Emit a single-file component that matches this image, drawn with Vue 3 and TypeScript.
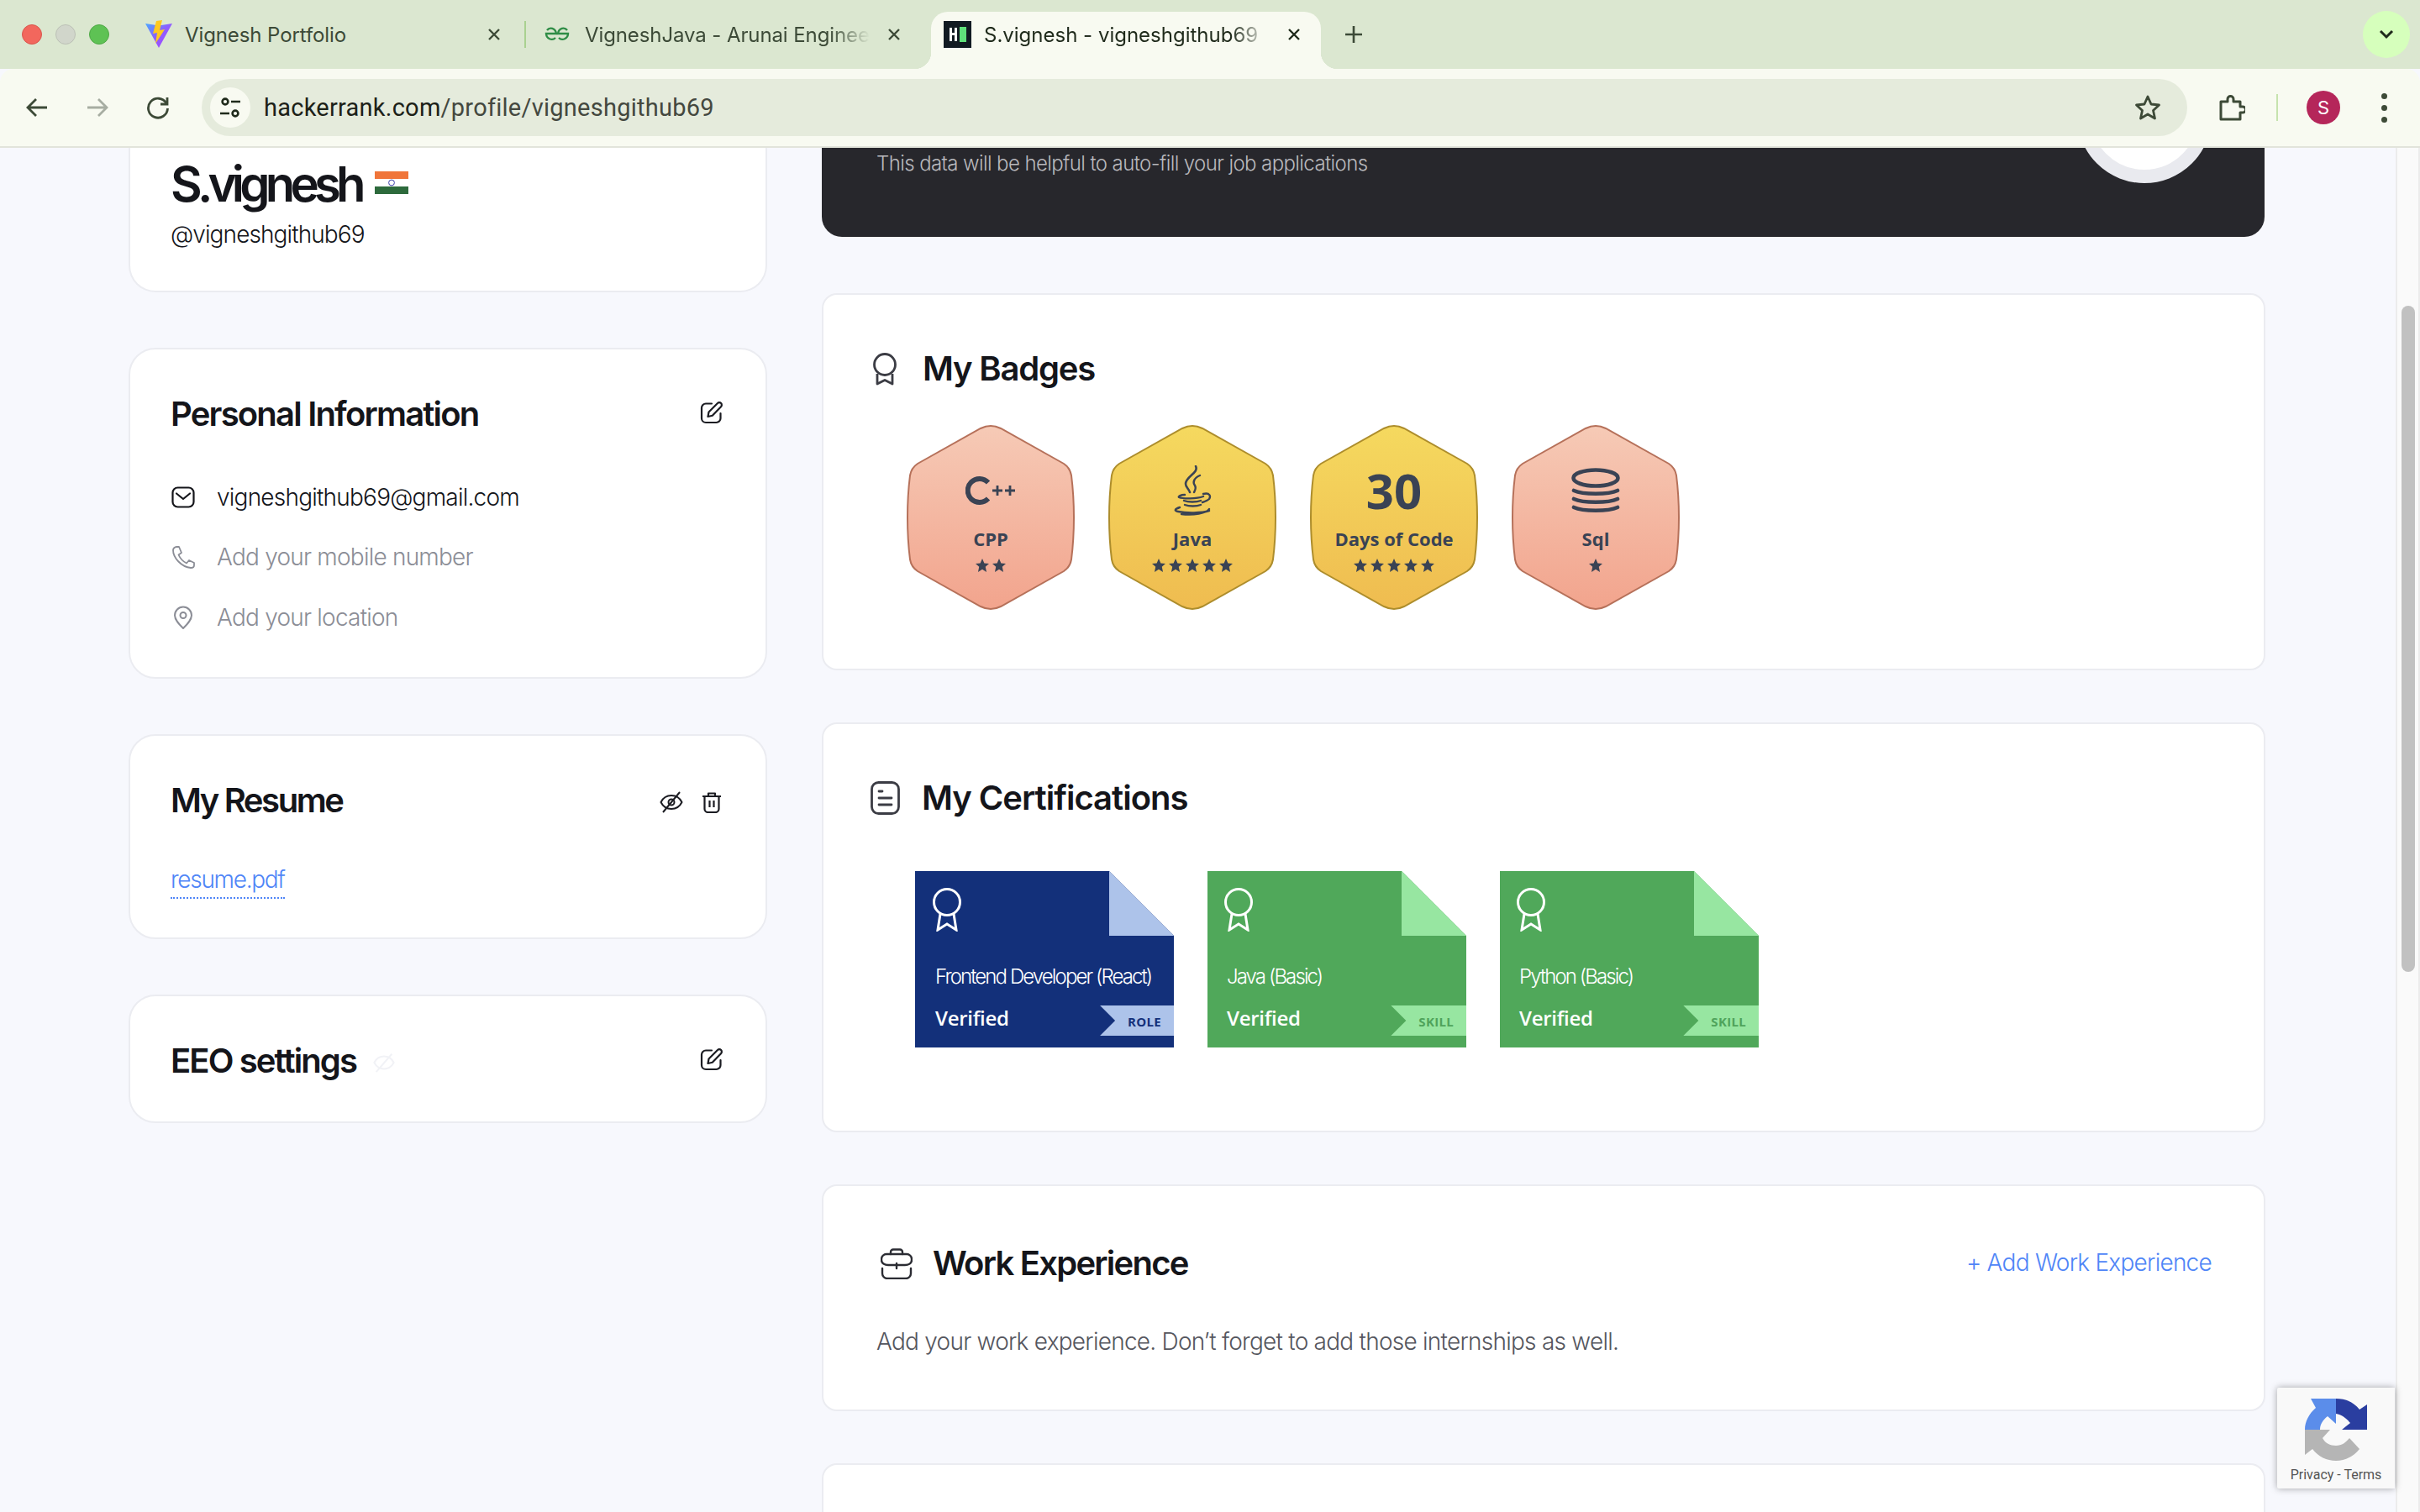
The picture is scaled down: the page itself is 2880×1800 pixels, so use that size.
<script setup lang="ts">
const infoRows = [
  { key: 'mail', text: 'vigneshgithub69@gmail.com', muted: false },
  { key: 'phone', text: 'Add your mobile number', muted: true },
  { key: 'pin', text: 'Add your location', muted: true },
]
const badges = [
  { name: 'CPP', tone: 'peach', stars: 2, icon: 'cpp' },
  { name: 'Java', tone: 'gold', stars: 5, icon: 'java' },
  { name: 'Days of Code', tone: 'gold', stars: 5, icon: 'thirty' },
  { name: 'Sql', tone: 'peach', stars: 1, icon: 'db' },
]
const certs = [
  { title: 'Frontend Developer (React)', kind: 'ROLE', tone: 'tone-navy' },
  { title: 'Java (Basic)', kind: 'SKILL', tone: 'tone-green' },
  { title: 'Python (Basic)', kind: 'SKILL', tone: 'tone-green' },
]
const hexPath =
  'M100 1C104 1 108 2 112 4L187 46C193 50 195 54 196 60C198 76 199 93 199 110C199 127 198 144 196 160C195 166 193 170 187 174L112 216C108 218 104 219 100 219C96 219 92 218 88 216L13 174C7 170 5 166 4 160C2 144 1 127 1 110C1 93 2 76 4 60C5 54 7 50 13 46L88 4C92 2 96 1 100 1Z'
</script>

<template>
  <div class="screen">
    <header class="tabstrip">
      <div class="lights">
        <span class="light red"></span>
        <span class="light grey"></span>
        <span class="light green"></span>
      </div>
      <div class="tab tab-one">
        <svg class="fav" width="34" height="34" viewBox="0 0 34 34">
          <defs>
            <linearGradient id="vite" x1="0" y1="0" x2="1" y2="1">
              <stop offset="0" stop-color="#4aa8ff" />
              <stop offset="0.5" stop-color="#8f5cff" />
              <stop offset="1" stop-color="#a845fe" />
            </linearGradient>
          </defs>
          <path d="M1 4L17 33L33 4L20 6L14 6Z" fill="url(#vite)" />
          <path d="M14 1L21 0L18 12L24 11L13 28L15 15L10 16Z" fill="#ffc91f" />
        </svg>
        <span class="tab-title">Vignesh Portfolio</span>
        <svg class="x" width="16" height="16" viewBox="0 0 16 16" stroke="#3c4a37" stroke-width="2.400"><path d="M2 2L14 14M14 2L2 14" /></svg>
      </div>
      <span class="tab-sep"></span>
      <div class="tab tab-two">
        <svg class="fav" width="30" height="20" viewBox="0 0 30 20" fill="none" stroke="#2f8d46" stroke-width="2.400">
          <path d="M3 5C6 1 13 2 14 9H2C2 15 9 18 13 14" />
          <path d="M27 5C24 1 17 2 16 9H28C28 15 21 18 17 14" />
        </svg>
        <span class="tab-title faded">VigneshJava - Arunai Enginee</span>
        <svg class="x" width="16" height="16" viewBox="0 0 16 16" stroke="#3c4a37" stroke-width="2.400"><path d="M2 2L14 14M14 2L2 14" /></svg>
      </div>
      <div class="tab tab-active">
        <svg class="fav" width="33" height="32" viewBox="0 0 33 32">
          <rect width="33" height="32" fill="#111a22" />
          <rect x="7" y="8" width="3" height="16" fill="#fff" />
          <rect x="13" y="8" width="3" height="16" fill="#fff" />
          <rect x="7" y="14" width="9" height="3" fill="#fff" />
          <rect x="19" y="7" width="8" height="18" fill="#5fe07b" />
        </svg>
        <span class="tab-title active-title">S.vignesh - vigneshgithub69</span>
        <svg class="x" width="16" height="16" viewBox="0 0 16 16" stroke="#1f2a1b" stroke-width="2.400"><path d="M2 2L14 14M14 2L2 14" /></svg>
      </div>
      <svg class="tab-plus" width="24" height="24" viewBox="0 0 24 24" stroke="#3c4a37" stroke-width="2.600"><path d="M12 2V22M2 12H22" /></svg>
      <span class="tab-search">
        <svg width="18" height="12" viewBox="0 0 18 12" fill="none" stroke="#1f2a1b" stroke-width="3"><path d="M2 2L9 9L16 2" /></svg>
      </span>
    </header>

    <div class="toolbar">
      <span class="nav">
        <svg width="30" height="30" viewBox="0 0 30 30" fill="none" stroke="#3d4a37" stroke-width="2.800"><path d="M27 15H4M14 5L4 15L14 25" /></svg>
      </span>
      <span class="nav">
        <svg width="30" height="30" viewBox="0 0 30 30" fill="none" stroke="#a7ada2" stroke-width="2.800"><path d="M3 15H26M16 5L26 15L16 25" /></svg>
      </span>
      <span class="nav">
        <svg width="30" height="30" viewBox="0 0 30 30" fill="none" stroke="#3d4a37" stroke-width="2.800"><path d="M25 10A11.500 11.500 0 1 0 26.500 16" /><path d="M26 3V11H18" /></svg>
      </span>
      <div class="omnibox">
        <span class="site-chip">
          <svg width="26" height="26" viewBox="0 0 26 26" fill="none" stroke="#1f2a1b" stroke-width="2.600">
            <circle cx="7" cy="6" r="3.400" /><path d="M14 6H25M1 20H12" /><circle cx="19" cy="20" r="3.400" />
          </svg>
        </span>
        <span class="url"><span class="url-host">hackerrank.com</span>/profile/vigneshgithub69</span>
        <svg class="star" width="32" height="32" viewBox="0 0 32 32" fill="none" stroke="#3d4a37" stroke-width="2.800" stroke-linejoin="round">
          <path d="M16 3L20 12L29.500 13L22.500 19.500L24.500 29L16 24L7.500 29L9.500 19.500L2.500 13L12 12Z" />
        </svg>
      </div>
      <span class="nav ext">
        <svg width="32" height="32" viewBox="0 0 32 32" fill="none" stroke="#3d4a37" stroke-width="3" stroke-linejoin="round">
          <path d="M3 9H11V6A3.500 3.500 0 0 1 18 6V9H26V15H29A3.500 3.500 0 0 1 29 22H26V30H3Z" />
        </svg>
      </span>
      <span class="tool-sep"></span>
      <span class="avatar">S</span>
      <span class="nav dots"><i></i><i></i><i></i></span>
    </div>

    <div class="viewport">
      <main class="page">
        <aside class="left">
          <section class="card profile">
            <div class="name-line">
              <h1>S.vignesh</h1>
              <svg class="flag" width="40" height="27" viewBox="0 0 40 27">
                <rect width="40" height="9" fill="#f0753a" />
                <rect y="18" width="40" height="9" fill="#2d6a3c" />
                <circle cx="20" cy="13.500" r="3.400" fill="none" stroke="#3a3fa8" stroke-width="1" />
              </svg>
            </div>
            <p class="handle">@vigneshgithub69</p>
          </section>

          <section class="card personal">
            <div class="card-head">
              <h2 class="t-personal">Personal Information</h2>
              <svg class="ic" width="28" height="28" viewBox="0 0 28 28" fill="none" stroke="#1b1c22" stroke-width="2.200" stroke-linejoin="round" stroke-linecap="round">
                <path d="M14 3.500H7A5 5 0 0 0 2 8.500V21A5 5 0 0 0 7 26H19.500A5 5 0 0 0 24.500 21V15" />
                <path d="M9.500 19L10.500 13.500L21 3A2.600 2.600 0 0 1 25 7.200L14.800 17.800Z" />
              </svg>
            </div>
            <ul class="rows">
              <li v-for="row in infoRows" :key="row.key" class="row" :class="{ muted: row.muted }">
                <svg v-if="row.key === 'mail'" width="28" height="26" viewBox="0 0 28 26" fill="none" stroke="#14151a" stroke-width="2.200" stroke-linecap="round" stroke-linejoin="round">
                  <rect x="1.500" y="1.500" width="25" height="23" rx="6" /><path d="M6 8.500L14 15L22 8.500" />
                </svg>
                <svg v-else-if="row.key === 'phone'" width="28" height="28" viewBox="0 0 28 28" fill="none" stroke="#8b8d96" stroke-width="1.800" stroke-linejoin="round">
                  <path d="M6 2H9L12 9L8.500 11.500C10.500 16 13 19 18 21.500L21 18L27 21V24C27 26 25 27 23 27C12 26 2 15 2 6C2 4 4 2 6 2Z" />
                </svg>
                <svg v-else width="28" height="28" viewBox="0 0 28 28" fill="none" stroke="#8b8d96" stroke-width="2">
                  <path d="M14 27C9 22 4 17 4 11.500A10 10 0 0 1 24 11.500C24 17 19 22 14 27Z" /><circle cx="14" cy="11.500" r="3.500" />
                </svg>
                <span>{{ row.text }}</span>
              </li>
            </ul>
          </section>

          <section class="card resume">
            <div class="card-head">
              <h2 class="t-resume">My Resume</h2>
              <div class="head-icons">
                <svg width="28" height="28" viewBox="0 0 28 28" fill="none" stroke="#1b1c22" stroke-width="2" stroke-linejoin="round">
                  <path d="M1.500 14C4 9 9 6 14 6C19 6 24 9 26.500 14C24 19 19 22 14 22C9 22 4 19 1.500 14Z" /><path d="M24 2L4 26" /><circle cx="14" cy="14" r="3.500" />
                </svg>
                <svg width="24" height="26" viewBox="0 0 24 26" fill="none" stroke="#1b1c22" stroke-width="2.200" stroke-linejoin="round">
                  <path d="M1 6H23M8 6V2.500H16V6M3.500 6V21A4 4 0 0 0 7.500 25H16.500A4 4 0 0 0 20.500 21V6M9.500 11V19M14.500 11V19" />
                </svg>
              </div>
            </div>
            <a class="pdf">resume.pdf</a>
          </section>

          <section class="card eeo">
            <div class="card-head">
              <div class="eeo-title">
                <h2 class="t-eeo">EEO settings</h2>
                <svg class="eeo-eye" width="26" height="26" viewBox="0 0 28 28" fill="none" stroke="#f1f2f6" stroke-width="2.200">
                  <path d="M1.500 14C4 9 9 6 14 6C19 6 24 9 26.500 14C24 19 19 22 14 22C9 22 4 19 1.500 14Z" /><path d="M24 3L4 26" />
                </svg>
              </div>
              <svg class="ic" width="28" height="28" viewBox="0 0 28 28" fill="none" stroke="#1b1c22" stroke-width="2.200" stroke-linejoin="round" stroke-linecap="round">
                <path d="M14 3.500H7A5 5 0 0 0 2 8.500V21A5 5 0 0 0 7 26H19.500A5 5 0 0 0 24.500 21V15" />
                <path d="M9.500 19L10.500 13.500L21 3A2.600 2.600 0 0 1 25 7.200L14.800 17.800Z" />
              </svg>
            </div>
          </section>
        </aside>

        <div class="right">
          <section class="banner">
            <p>This data will be helpful to auto-fill your job applications</p>
            <span class="ring"></span>
          </section>

          <section class="panel badges">
            <div class="panel-head">
              <svg width="28" height="39" viewBox="0 0 28 39" fill="none" stroke="#3b3c44" stroke-width="2.800" stroke-linejoin="round">
                <circle cx="14" cy="14" r="12.500" /><path d="M5 25V37L14 32.500L23 37V25" />
              </svg>
              <h2 class="t-badges">My Badges</h2>
            </div>
            <div class="hex-row">
              <div v-for="b in badges" :key="b.name" class="hex">
                <svg class="hex-bg" width="200" height="220" viewBox="0 0 200 220">
                  <defs>
                    <linearGradient id="peach" x1="0" y1="0" x2="0" y2="1">
                      <stop offset="0" stop-color="#f6cab6" /><stop offset="1" stop-color="#f2a48d" />
                    </linearGradient>
                    <linearGradient id="gold" x1="0" y1="0" x2="0" y2="1">
                      <stop offset="0" stop-color="#f5d95f" /><stop offset="1" stop-color="#efbc50" />
                    </linearGradient>
                  </defs>
                  <path :d="hexPath" :fill="b.tone === 'peach' ? 'url(#peach)' : 'url(#gold)'" :stroke="b.tone === 'peach' ? '#b6715a' : '#ad8d2c'" stroke-width="2" />
                </svg>
                <div class="hex-body">
                  <div class="hex-icon">
                    <svg v-if="b.icon === 'cpp'" width="60" height="60" viewBox="0 0 60 60" fill="none" stroke="#3a4354" stroke-width="6">
                      <path d="M27 20.500A14 14 0 1 0 27 39.500" />
                      <path d="M32 30H44M38 24V36M47 30H59M53 24V36" stroke-width="2.800" />
                    </svg>
                    <svg v-else-if="b.icon === 'java'" width="46" height="60" viewBox="0 0 46 60" fill="none" stroke="#3a4354" stroke-width="2.400" stroke-linecap="round">
                      <path d="M27 1C31 9 15 13 15 22C15 26 19 28 20 32" stroke-width="2.600" />
                      <path d="M32 12C25 15 23 20 26 24C28 27 26 30 25 32" stroke-width="2.400" />
                      <path d="M14 35C9 35 6 37 7 38C12 40 28 40 36 37M36 34C44 32 45 37 43 40C41 42 38 43 35 44" />
                      <path d="M13 42C18 44 28 44 33 42M14 47C19 49 28 49 33 47" />
                      <path d="M8 50C2 52 1 54 6 55C16 57 34 57 43 54M43 52C40 57 24 60 10 58" />
                    </svg>
                    <span v-else-if="b.icon === 'thirty'" class="thirty">30</span>
                    <svg v-else width="58" height="54" viewBox="0 0 58 54" fill="none" stroke="#3a4354" stroke-width="4.600" stroke-linecap="round">
                      <ellipse cx="29" cy="12" rx="26.500" ry="9.500" />
                      <path d="M3 27C14 32 44 32 55 27M3 37C14 42 44 42 55 37M3 47C14 52 44 52 55 47" />
                    </svg>
                  </div>
                  <span class="hex-name">{{ b.name }}</span>
                  <div class="hex-stars">
                    <svg v-for="n in b.stars" :key="n" width="16" height="16" viewBox="0 0 20 20">
                      <path d="M10 0L13 7L20 7.600L14.700 12.300L16.300 20L10 16L3.700 20L5.300 12.300L0 7.600L7 7Z" fill="#3a4354" />
                    </svg>
                  </div>
                </div>
              </div>
            </div>
          </section>

          <section class="panel certs">
            <div class="panel-head">
              <svg width="35" height="40" viewBox="0 0 35 40" fill="none" stroke="#3b3c44" stroke-width="2.800" stroke-linecap="round">
                <rect x="1.500" y="1.500" width="32" height="37" rx="8" /><path d="M10 12H14M10 20H25M10 28H25" />
              </svg>
              <h2 class="t-certs">My Certifications</h2>
            </div>
            <div class="cert-row">
              <div v-for="c in certs" :key="c.title" class="cert-wrap" :class="c.tone">
                <article class="cert">
                  <svg class="cert-ico" width="34" height="52" viewBox="0 0 34 52" fill="none" stroke="#fff" stroke-width="3">
                    <circle cx="17" cy="17" r="15.500" /><path d="M9 31L6 50L17 43L28 50L25 31" />
                  </svg>
                  <p class="cert-title">{{ c.title }}</p>
                  <div class="cert-foot">
                    <strong>Verified</strong>
                    <span class="ribbon">{{ c.kind }}</span>
                  </div>
                </article>
                <span class="cert-fold"></span>
              </div>
            </div>
          </section>

          <section class="panel work">
            <div class="work-head">
              <svg width="38" height="37" viewBox="0 0 38 37" fill="none" stroke="#2b2c33" stroke-width="2.400" stroke-linejoin="round" stroke-linecap="round">
                <path d="M12 7V4.500A3 3 0 0 1 15 1.500H23A3 3 0 0 1 26 4.500V7" />
                <path d="M7 7H31A6 6 0 0 1 37 13V14C37 18 33 20 29 20H9C5 20 1 18 1 14V13A6 6 0 0 1 7 7Z" />
                <path d="M19 18V24M2 24V30A6 6 0 0 0 8 36H30A6 6 0 0 0 36 30V24" />
              </svg>
              <h2 class="t-work">Work Experience</h2>
              <a class="add">+ Add Work Experience</a>
            </div>
            <p class="work-text">Add your work experience. Don’t forget to add those internships as well.</p>
          </section>

          <section class="panel next"></section>
        </div>
      </main>

      <div class="scrollbar"><span class="thumb"></span></div>

      <div class="recaptcha">
        <svg width="74" height="74" viewBox="0 0 74 74">
          <path d="M0 37C0 27 5 18 13 11L7 0H37V30L27 21C22 25 18 30 18 37Z" fill="#5b8dea" />
          <path d="M37 0C48 0 58 4 65 13L74 7V37H44L54 29C50 24 44 19 37 18Z" fill="#2a3ea0" />
          <path d="M0 37H30L21 47C24 53 30 56 37 56C44 56 49 52 53 47L65 60C58 69 48 74 37 74C26 74 16 69 9 60L0 67Z" fill="#b5b5b5" />
        </svg>
        <span>Privacy - Terms</span>
      </div>
    </div>
  </div>
</template>

<style>
html, body { margin: 0; padding: 0; background: #f7f8fd; }
</style>

<style scoped>
* { box-sizing: border-box; }
h1, h2, p, ul { margin: 0; padding: 0; }
ul { list-style: none; }

.screen {
  width: 2880px; height: 1800px; overflow: hidden;
  display: flex; flex-direction: column;
  font-family: Inter, "Noto Sans", sans-serif;
  color: #14151a;
  background: #f7f8fd;
}

/* tab strip */
.tabstrip { height: 82px; flex: none; background: #dbe7d0; display: flex; align-items: center; position: relative; }
.lights { display: flex; gap: 16px; padding-left: 26px; width: 168px; flex: none; }
.light { width: 24px; height: 24px; border-radius: 50%; }
.red { background: #f2675d; border: 1px solid #d9564d; }
.grey { background: #d1d6cb; border: 1px solid #bcc1b6; }
.green { background: #5ec254; border: 1px solid #4fa846; }
.tab { display: flex; align-items: center; flex: none; height: 68px; margin-top: 14px; padding-bottom: 14px; position: relative; }
.tab-one { width: 456px; padding-left: 4px; }
.tab-sep { width: 2px; height: 32px; background: #a9d190; flex: none; }
.tab-two { width: 482px; padding-left: 22px; }
.tab-title { font-size: 24px; color: #3c4a37; white-space: nowrap; font-weight: 400; letter-spacing: -0.1px; }
.fav { flex: none; }
.x { flex: none; position: absolute; top: 19px; }
.tab-one .x { left: 412px; }
.tab-two .x { left: 430px; }
.tab-active .x { left: 424px; }
.tab-one .tab-title { margin-left: 14px; }
.tab-two .tab-title { margin-left: 18px; }
.faded { -webkit-mask-image: linear-gradient(to right, #000 86%, transparent 100%); mask-image: linear-gradient(to right, #000 86%, transparent 100%); }
.tab-active {
  width: 464px; background: #f8faf1; border-radius: 20px 20px 0 0; padding-left: 15px;
}
.tab-active::before, .tab-active::after {
  content: ""; position: absolute; bottom: 0; width: 20px; height: 20px;
}
.tab-active::before { left: -20px; background: radial-gradient(circle at 0 0, transparent 20px, #f8faf1 20.5px); }
.tab-active::after { right: -20px; background: radial-gradient(circle at 100% 0, transparent 20px, #f8faf1 20.5px); }
.active-title { margin-left: 15px; color: #1f2a1b; letter-spacing: 0; -webkit-mask-image: linear-gradient(to right, #000 90%, rgba(0,0,0,.3) 100%); mask-image: linear-gradient(to right, #000 90%, rgba(0,0,0,.3) 100%); }
.tab-plus { margin-left: 27px; flex: none; }
.tab-search { width: 56px; height: 56px; border-radius: 28px / 28px; background: #d6ffbc; margin-left: 1189px; display: flex; align-items: center; justify-content: center; flex: none; }

/* toolbar */
.toolbar {
  height: 94px; flex: none; background: #f8faf1; border-radius: 16px 16px 0 0; border-bottom: 2px solid #e2e4db;
  display: flex; align-items: center; padding-left: 16px; gap: 16px; margin-top: 0;
}
.nav { width: 56px; height: 56px; display: flex; align-items: center; justify-content: center; flex: none; }
.omnibox {
  width: 2363px; height: 68px; border-radius: 34px; background: #e5ebdc; margin-left: 8px; flex: none;
  display: flex; align-items: center; padding-left: 10px; padding-right: 31px;
}
.site-chip { width: 48px; height: 48px; border-radius: 50%; background: #f8faf1; display: flex; align-items: center; justify-content: center; flex: none; }
.url { margin-left: 16px; font-size: 29px; color: #44483f; font-family: Roboto, sans-serif; letter-spacing: 0.25px; flex: 1; }
.url-host { color: #1c2118; }
.star { flex: none; }
.ext { margin-left: 9px; }
.tool-sep { width: 2px; height: 32px; background: #c6e3ae; margin-left: 9px; flex: none; }
.avatar { width: 40px; height: 40px; border-radius: 50%; background: #b5265a; color: #fff; font-size: 22px; display: flex; align-items: center; justify-content: center; margin-left: 18px; flex: none; }
.dots { flex-direction: column; gap: 7px; margin-left: 8px; }
.dots i { width: 7px; height: 7px; border-radius: 50%; background: #3d4a37; }

/* page */
.viewport { flex: 1; min-height: 0; display: flex; position: relative; overflow: hidden; }
.page { flex: 1; display: flex; gap: 65px; padding-left: 153px; }
.left { width: 760px; flex: none; display: flex; flex-direction: column; gap: 66px; }
.right { width: 1718px; flex: none; display: flex; flex-direction: column; }

.card { background: #fff; border: 2px solid #ebecf1; border-radius: 32px; padding: 0 50px 0 48px; flex: none; }
.profile { height: 172px; border-top: 0; border-radius: 0 0 32px 32px; }
.name-line { display: flex; align-items: center; gap: 16px; height: 50px; margin-top: 18px; }
h1 { font-size: 58px; line-height: 50px; font-weight: 600; letter-spacing: -5.8px; color: #14151a; }
.flag { margin-top: -4px; }
.handle { font-size: 28px; font-weight: 300; line-height: 40px; margin-top: 15px; letter-spacing: -0.9px; }

h2 { font-size: 40px; font-weight: 600; line-height: 56px; color: #14151a; white-space: nowrap; }
.t-personal { letter-spacing: -1.8px; }
.t-resume { letter-spacing: -2.4px; }
.t-eeo { letter-spacing: -1.9px; }
.t-badges { letter-spacing: -1.2px; }
.t-certs { letter-spacing: -1px; }
.t-work { letter-spacing: -1.75px; }
.card-head { display: flex; align-items: center; justify-content: space-between; margin-top: 49px; height: 56px; }
.ic { margin-top: -4px; }
.personal { height: 394px; }
.rows { margin-top: 35px; }
.row { height: 71.5px; display: flex; align-items: center; gap: 26px; font-size: 28px; font-weight: 300; letter-spacing: -0.78px; }
.row svg { flex: none; margin-left: 1px; }
.row.muted { color: #8b8d96; }
.resume { height: 244px; }
.head-icons { display: flex; align-items: center; gap: 22px; margin-right: 2px; margin-top: 4px; }
.pdf { display: inline-block; margin-top: 48px; font-size: 28px; font-weight: 300; color: #4f85f7; line-height: 36px; letter-spacing: -1.3px; border-bottom: 2px dotted #4f85f7; padding-bottom: 3px; }
.eeo { height: 153px; }
.eeo .card-head { margin-top: 49px; }
.eeo-title { display: flex; align-items: center; gap: 20px; }
.eeo-eye { margin-top: 4px; }

.banner { height: 106px; flex: none; background: #27272c; border-radius: 0 0 24px 24px; padding-left: 65px; position: relative; overflow: hidden; margin-right: 1px; }
.banner p { font-size: 24px; font-weight: 300; color: #b9b9bd; line-height: 32px; padding-top: 3px; letter-spacing: -0.6px; }
.ring { position: absolute; left: 1494px; top: -118px; width: 160px; height: 160px; border-radius: 50%; border: 16px solid #e9eaef; background: #fff; }

.panel { background: #fff; border: 2px solid #ebecf1; border-radius: 18px; flex: none; }
.badges { height: 449px; margin-top: 67px; padding: 64px 0 0 59px; }
.panel-head { display: flex; align-items: center; gap: 31px; height: 48px; }
.hex-row { display: flex; gap: 40px; margin: 43px 0 0 40px; }
.hex { width: 200px; height: 220px; position: relative; flex: none; }
.hex-bg { position: absolute; left: 0; top: 0; }
.hex-body { position: absolute; inset: 0; display: flex; flex-direction: column; align-items: center; padding-top: 48px; font-family: "Open Sans", sans-serif; color: #3a4354; }
.hex-icon { height: 60px; display: flex; align-items: center; justify-content: center; }
.thirty { font-size: 58px; font-weight: 700; line-height: 60px; }
.hex-name { font-size: 22px; font-weight: 700; line-height: 28px; margin-top: 13px; white-space: nowrap; }
.hex-stars { display: flex; gap: 4px; margin-top: 10px; }

.certs { height: 488px; margin-top: 62px; padding: 64px 0 0 56px; }
.certs .panel-head { gap: 26px; }
.cert-row { display: flex; gap: 40px; margin: 63px 0 0 53px; }
.cert-wrap { width: 308px; height: 210px; position: relative; flex: none; }
.cert { width: 100%; height: 100%; color: #fff; padding: 20px 0 0 24px; clip-path: polygon(0 0, 231px 0, 100% 77px, 100% 100%, 0 100%); background: var(--bg); }
.tone-navy { --bg: #13307a; --fold: #adc3ea; --tag: #13307a; }
.tone-green { --bg: #50a85a; --fold: #97e6a1; --tag: #4fa35b; }
.tone-green .cert { padding-left: 23px; }
.cert-fold { position: absolute; left: 231px; top: 0; width: 77px; height: 77px; background: var(--fold); clip-path: polygon(0 0, 100% 100%, 0 100%); }
.cert-ico { display: block; margin-left: -3px; }
.cert-title { font-size: 24px; font-weight: 300; letter-spacing: -1.9px; line-height: 32px; margin-top: 38px; white-space: nowrap; }
.cert-foot { display: flex; align-items: center; justify-content: space-between; margin-top: 16px; height: 32px; }
.cert-foot strong { font-family: "Open Sans", sans-serif; font-size: 24px; font-weight: 600; letter-spacing: -0.3px; }
.ribbon {
  height: 36px; padding: 0 15px 0 33px; align-self: flex-start; margin-top: 2px; background: var(--fold); color: var(--tag);
  clip-path: polygon(0 0, 100% 0, 100% 100%, 0 100%, 18px 50%);
  font: 700 15px/38px "Open Sans", sans-serif; letter-spacing: 0.3px;
}

.work { height: 270px; margin-top: 62px; padding: 0 62px 0 63px; }
.work-head { display: flex; align-items: center; margin-top: 68px; height: 48px; padding-left: 5px; }
.work-head h2 { margin-left: 24px; }
.add { margin-left: auto; font-size: 28px; font-weight: 300; color: #4f85f7; letter-spacing: -0.75px; margin-top: -2px; }
.work-text { font-size: 28px; font-weight: 300; color: #55565e; margin-top: 49px; line-height: 40px; letter-spacing: -0.75px; }
.next { height: 200px; margin-top: 62px; }

.scrollbar { width: 29px; flex: none; background: #fafafa; border-left: 2px solid #ececec; border-right: 2px solid #ececec; position: relative; }
.thumb { position: absolute; left: 5px; top: 188px; width: 16px; height: 793px; border-radius: 8px; background: #c1c1c1; }

.recaptcha {
  position: absolute; right: 30px; bottom: 28px; width: 140px; height: 120px; background: #f9f9f9;
  box-shadow: 0 0 8px rgba(0,0,0,.35); border-radius: 2px 0 0 2px;
  display: flex; flex-direction: column; align-items: center; padding-top: 13px;
}
.recaptcha span { font: 400 16px/20px Roboto, sans-serif; color: #555; margin-top: 7px; white-space: nowrap; }
</style>
